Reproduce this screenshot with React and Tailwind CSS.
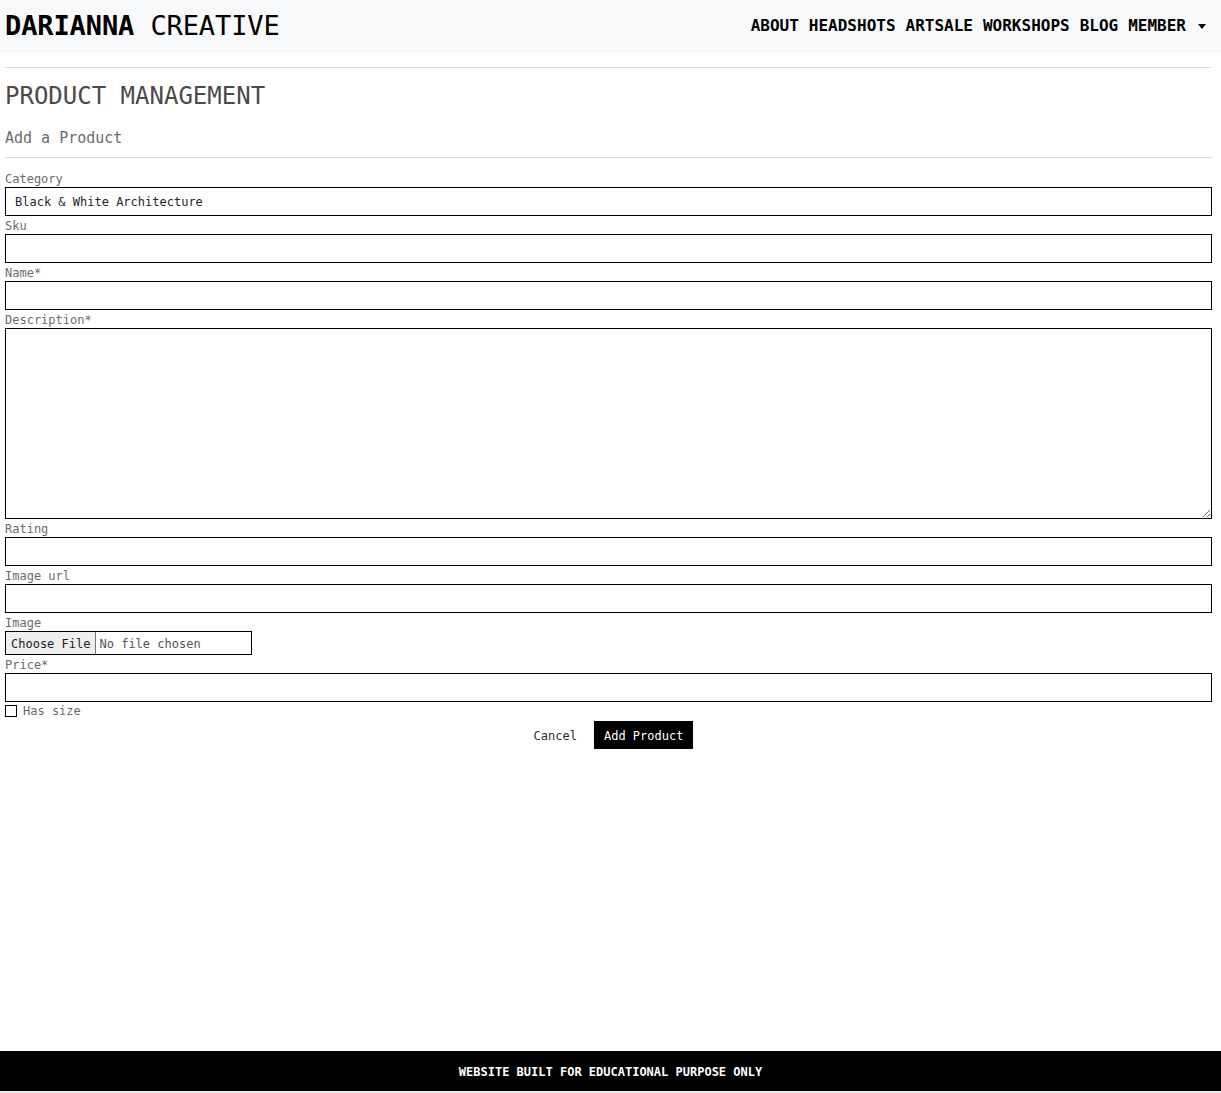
import React from "react";

const NAV = ["ABOUT", "HEADSHOTS", "ARTSALE", "WORKSHOPS", "BLOG", "MEMBER"];

function Field({ label, children }) {
	return (
		<div>
			<label className="block h-[18px] leading-[20px] text-[12px] text-[#6f6a6a]">{label}</label>
			{children}
		</div>
	);
}

function TextInput() {
	return <input type="text" className="block w-full h-[29px] border border-black bg-white px-[10px] text-[12px] outline-none" />;
}

export default function App() {
	return (
		<div className="min-h-[1093px] flex flex-col bg-white text-black" style={{ fontFamily: '"DejaVu Sans Mono", "Liberation Mono", monospace' }}>
			{/* navbar */}
			<header className="h-[54px] bg-[#f8f9fa] flex items-center justify-between pl-[5px] pr-[15px] pb-[3px]">
				<a className="text-[27px] leading-none tracking-[-0.1px] whitespace-pre">
					<span className="font-bold">DARIANNA</span>
					<span className="font-light"> CREATIVE</span>
				</a>
				<nav className="flex items-center gap-[10px] text-[16px] font-bold pt-[1px]">
					{NAV.map((item) => (
						<a key={item} className="leading-none">
							{item}
						</a>
					))}
					<span className="w-0 h-0 border-x-[4px] border-x-transparent border-t-[5px] border-t-black ml-[2px]" />
				</nav>
			</header>

			<main className="flex-1 pl-[5px] pr-[9px]">
				<hr className="mt-[13px] border-t border-[#dcdcdc]" />
				<h1 className="mt-[14px] text-[24px] leading-[29px] text-[#4a4a4a]">PRODUCT MANAGEMENT</h1>
				<h2 className="mt-[17px] text-[15px] leading-[20px] font-medium text-[#6b6b6b]">Add a Product</h2>
				<hr className="mt-[9px] border-t border-[#dcdcdc]" />

				<form className="mt-[11px]">
					<Field label="Category">
						<div className="h-[29px] border border-black flex items-center pl-[9px] pt-[1px] text-[12px] text-[#2a2230]">Black &amp; White Architecture</div>
					</Field>
					<Field label="Sku">
						<TextInput />
					</Field>
					<Field label="Name*">
						<TextInput />
					</Field>
					<Field label="Description*">
						<textarea className="block w-full h-[191px] border border-black bg-white px-[10px] text-[12px] outline-none" />
					</Field>
					<Field label="Rating">
						<TextInput />
					</Field>
					<Field label="Image url">
						<TextInput />
					</Field>
					<Field label="Image">
						<div className="w-[247px] h-[24px] border border-black flex items-center text-[12px]">
							<span className="h-full flex items-center px-[5px] pt-[1px] bg-[#efefef] border-r border-[#767676] text-[#1a1a2a]">Choose File</span>
							<span className="pl-[3px] pt-[1px] text-[#555]">No file chosen</span>
						</div>
					</Field>
					<Field label="Price*">
						<TextInput />
					</Field>
					<div className="flex items-start h-[19px] pt-[3px]">
						<input type="checkbox" className="appearance-none w-[12px] h-[12px] border border-black bg-white m-0" />
						<span className="ml-[6px] text-[12px] leading-[13px] text-[#6f6a6a]">Has size</span>
					</div>
					<div className="flex justify-center gap-[7px]">
						<button type="button" className="h-[28px] px-[10px] pt-[1px] text-[12px] text-[#1f2d3d]">Cancel</button>
						<button type="button" className="h-[28px] px-[10px] pt-[1px] text-[12px] font-medium bg-black text-white">Add Product</button>
					</div>
				</form>
			</main>

			<footer className="h-[40px] bg-black flex items-center justify-center pt-[1px] text-[12px] font-bold text-white">
				WEBSITE BUILT FOR EDUCATIONAL PURPOSE ONLY
			</footer>
			<div className="h-[2px] bg-[#e9e9e9]" />
		</div>
	);
}
